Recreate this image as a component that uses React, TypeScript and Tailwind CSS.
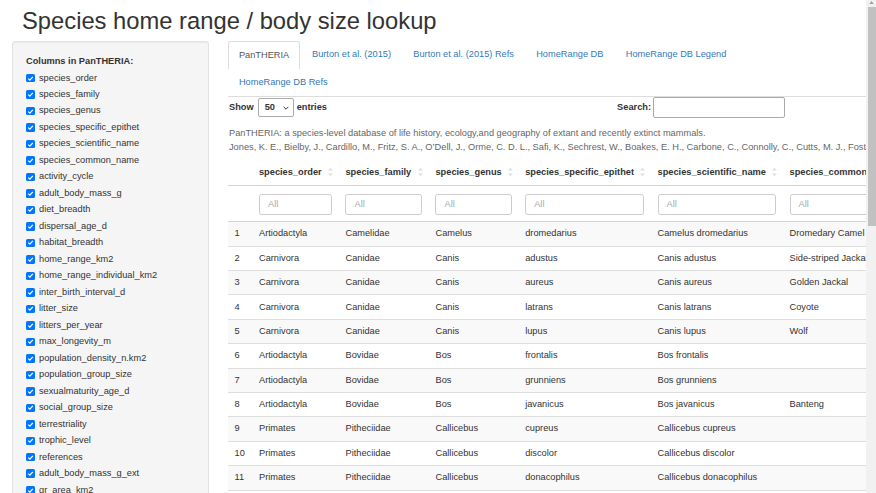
import React from "react";

const sideCols = [
  "species_order",
  "species_family",
  "species_genus",
  "species_specific_epithet",
  "species_scientific_name",
  "species_common_name",
  "activity_cycle",
  "adult_body_mass_g",
  "diet_breadth",
  "dispersal_age_d",
  "habitat_breadth",
  "home_range_km2",
  "home_range_individual_km2",
  "inter_birth_interval_d",
  "litter_size",
  "litters_per_year",
  "max_longevity_m",
  "population_density_n.km2",
  "population_group_size",
  "sexualmaturity_age_d",
  "social_group_size",
  "terrestriality",
  "trophic_level",
  "references",
  "adult_body_mass_g_ext",
  "gr_area_km2",
];

const headers = [
  { name: "species_order", w: 86.5 },
  { name: "species_family", w: 90 },
  { name: "species_genus", w: 89.7 },
  { name: "species_specific_epithet", w: 132.4 },
  { name: "species_scientific_name", w: 132 },
  { name: "species_common_name", w: 150 },
];

const rows: string[][] = [
  ["1", "Artiodactyla", "Camelidae", "Camelus", "dromedarius", "Camelus dromedarius", "Dromedary Camel"],
  ["2", "Carnivora", "Canidae", "Canis", "adustus", "Canis adustus", "Side-striped Jackal"],
  ["3", "Carnivora", "Canidae", "Canis", "aureus", "Canis aureus", "Golden Jackal"],
  ["4", "Carnivora", "Canidae", "Canis", "latrans", "Canis latrans", "Coyote"],
  ["5", "Carnivora", "Canidae", "Canis", "lupus", "Canis lupus", "Wolf"],
  ["6", "Artiodactyla", "Bovidae", "Bos", "frontalis", "Bos frontalis", ""],
  ["7", "Artiodactyla", "Bovidae", "Bos", "grunniens", "Bos grunniens", ""],
  ["8", "Artiodactyla", "Bovidae", "Bos", "javanicus", "Bos javanicus", "Banteng"],
  ["9", "Primates", "Pitheciidae", "Callicebus", "cupreus", "Callicebus cupreus", ""],
  ["10", "Primates", "Pitheciidae", "Callicebus", "discolor", "Callicebus discolor", ""],
  ["11", "Primates", "Pitheciidae", "Callicebus", "donacophilus", "Callicebus donacophilus", ""],
  ["12", "Primates", "Pitheciidae", "Callicebus", "hoffmannsi", "Callicebus hoffmannsi", ""],
];

function Check() {
  return (
    <span className="inline-flex w-[8.5px] h-[8.5px] rounded-[1.5px] bg-[#0075ff] items-center justify-center shrink-0">
      <svg viewBox="0 0 10 10" className="w-[7px] h-[7px]">
        <path d="M1.8 5.2 L4.1 7.4 L8.3 2.6" stroke="white" strokeWidth="1.8" fill="none" />
      </svg>
    </span>
  );
}

function SortIcon() {
  return (
    <svg viewBox="0 0 6 11" className="absolute right-[6px] top-1/2 -translate-y-1/2 w-[5px] h-[9px]">
      <path d="M3 0 L6 4 L0 4 Z" fill="#e2e2e2" />
      <path d="M3 11 L6 7 L0 7 Z" fill="#e2e2e2" />
    </svg>
  );
}

const tabs1 = ["PanTHERIA", "Burton et al. (2015)", "Burton et al. (2015) Refs", "HomeRange DB", "HomeRange DB Legend"];

export default function App() {
  return (
    <div className="flex w-[876px] h-[493px] overflow-hidden bg-white text-[#333] font-['Liberation_Sans',Arial,sans-serif]">
      <div className="flex-1 min-w-0 overflow-hidden">
        <div className="h-[41px] pl-[22px] pt-[8px] text-[23.76px] leading-[26px] whitespace-nowrap">
          Species home range / body size lookup
        </div>
        <div className="flex items-start pl-[12px]">
          {/* Sidebar */}
          <div className="w-[197px] shrink-0 h-[470px] bg-[#f5f5f5] border border-[#e3e3e3] rounded-[3px] shadow-[inset_0_1px_1px_rgba(0,0,0,0.05)] pl-[13px] pt-[13px]">
            <div className="text-[9.24px] leading-[13.2px] font-bold mb-[3.3px]">Columns in PanTHERIA:</div>
            <div className="flex flex-col gap-[3.3px]">
              {sideCols.map((c) => (
                <div key={c} className="flex items-center gap-[4.5px] h-[13.2px] text-[9.24px] leading-[13.2px]">
                  <Check />
                  <span>{c}</span>
                </div>
              ))}
            </div>
          </div>
          {/* Main */}
          <div className="ml-[19px] flex-1 min-w-0 overflow-hidden">
            <div className="border-b border-[#ddd] text-[9.24px] leading-[13.2px]">
              <div className="flex h-[27.7px]">
                {tabs1.map((t, i) => (
                  <div
                    key={t}
                    className={
                      i === 0
                        ? "px-[9.9px] mr-[1px] flex items-center bg-white border border-b-0 border-[#ddd] rounded-t-[2.6px] text-[#555] whitespace-nowrap"
                        : "px-[9.9px] mr-[0.5px] flex items-center border border-transparent text-[#337ab7] whitespace-nowrap"
                    }
                  >
                    {t}
                  </div>
                ))}
              </div>
              <div className="flex h-[27.7px]">
                <div className="px-[9.9px] flex items-center border border-transparent text-[#337ab7] whitespace-nowrap">
                  HomeRange DB Refs
                </div>
              </div>
            </div>
            {/* Controls */}
            <div className="w-[557px] flex justify-between items-center h-[21px] text-[9.24px] font-bold">
              <div className="flex items-center pl-[1px]">
                <span>Show</span>
                <div className="ml-[4px] mr-[3px] w-[36px] h-[19px] border border-[#aaa] rounded-[2px] flex items-center justify-between pl-[6px] pr-[4px]">
                  <span>50</span>
                  <svg viewBox="0 0 10 6" className="w-[6px] h-[4px]">
                    <path d="M1 1 L5 5 L9 1" stroke="#333" strokeWidth="1.6" fill="none" />
                  </svg>
                </div>
                <span>entries</span>
              </div>
              <div className="flex items-center">
                <span>Search:</span>
                <div className="ml-[2px] w-[132px] h-[21px] border border-[#aaa] rounded-[2px] bg-white" />
              </div>
            </div>
            {/* Description */}
            <div className="mt-[8px] text-[9.24px] leading-[14px] text-[#666] whitespace-nowrap pl-[1px]">
              <div>PanTHERIA: a species-level database of life history, ecology,and geography of extant and recently extinct mammals.</div>
              <div>
                Jones, K. E., Bielby, J., Cardillo, M., Fritz, S. A., O’Dell, J., Orme, C. D. L., Safi, K., Sechrest, W., Boakes, E. H., Carbone, C., Connolly, C., Cutts, M. J., Foster, J. K., Grenyer, R., Habib, M., Plaster, C. A., Price, S. A.
              </div>
            </div>
            {/* Table */}
            <table className="mt-[5px] table-fixed border-collapse text-[9.24px] leading-[13.2px] w-[705px]">
              <colgroup>
                <col className="w-[24.4px]" />
                {headers.map((h) => (
                  <col key={h.name} style={{ width: h.w }} />
                ))}
              </colgroup>
              <thead>
                <tr className="h-[26.4px] border-b border-[#d4d4d4]">
                  <th className="px-[6.6px]" />
                  {headers.map((h) => (
                    <th key={h.name} className="relative px-[6.6px] text-left font-bold whitespace-nowrap overflow-hidden">
                      {h.name}
                      <SortIcon />
                    </th>
                  ))}
                </tr>
                <tr className="h-[36px] border-b border-[#d4d4d4]">
                  <th className="px-[6.6px]" />
                  {headers.map((h) => (
                    <th key={h.name} className="px-[6.6px] pt-[1px] text-left font-normal">
                      <div className="w-full h-[21px] border border-[#ccc] rounded-[2.6px] bg-white flex items-center pl-[8px] text-[#aaa]">
                        All
                      </div>
                    </th>
                  ))}
                </tr>
              </thead>
              <tbody>
                {rows.map((r, i) => (
                  <tr key={r[0]} className={(i % 2 === 0 ? "bg-[#f9f9f9] " : "bg-white ") + "h-[24.4px] border-t border-[#ddd]"}>
                    {r.map((c, j) => (
                      <td key={j} className="px-[6.6px] whitespace-nowrap overflow-hidden">
                        {c}
                      </td>
                    ))}
                  </tr>
                ))}
              </tbody>
            </table>
          </div>
        </div>
      </div>
      {/* Scrollbar */}
      <div className="w-[10px] shrink-0 bg-[#f1f1f1] flex flex-col items-center">
        <svg viewBox="0 0 6 4" className="w-[5px] h-[3px] mt-[1px]">
          <path d="M3 0 L6 4 L0 4 Z" fill="#a3a3a3" />
        </svg>
        <div className="mt-[3px] ml-[1px] w-[8px] h-[219px] bg-[#c1c1c1]" />
      </div>
    </div>
  );
}
